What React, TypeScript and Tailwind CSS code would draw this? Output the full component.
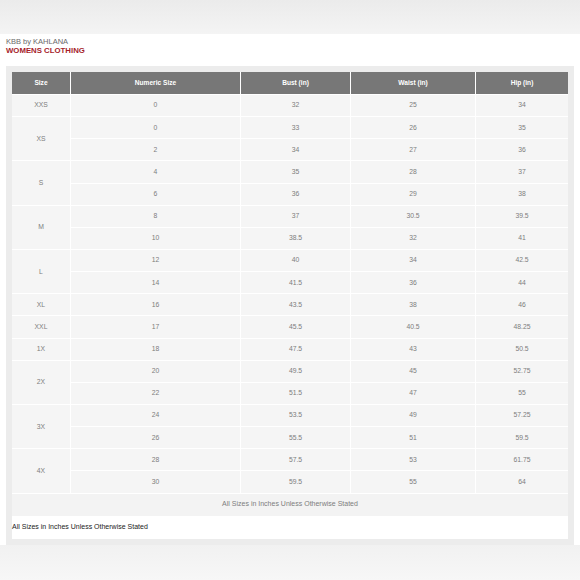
import React from 'react';

type Row = { size?: string; span?: number; numeric: string; bust: string; waist: string; hip: string };

const rows: Row[] = [
    { size: 'XXS', span: 1, numeric: '0', bust: '32', waist: '25', hip: '34' },
    { size: 'XS', span: 2, numeric: '0', bust: '33', waist: '26', hip: '35' },
    { numeric: '2', bust: '34', waist: '27', hip: '36' },
    { size: 'S', span: 2, numeric: '4', bust: '35', waist: '28', hip: '37' },
    { numeric: '6', bust: '36', waist: '29', hip: '38' },
    { size: 'M', span: 2, numeric: '8', bust: '37', waist: '30.5', hip: '39.5' },
    { numeric: '10', bust: '38.5', waist: '32', hip: '41' },
    { size: 'L', span: 2, numeric: '12', bust: '40', waist: '34', hip: '42.5' },
    { numeric: '14', bust: '41.5', waist: '36', hip: '44' },
    { size: 'XL', span: 1, numeric: '16', bust: '43.5', waist: '38', hip: '46' },
    { size: 'XXL', span: 1, numeric: '17', bust: '45.5', waist: '40.5', hip: '48.25' },
    { size: '1X', span: 1, numeric: '18', bust: '47.5', waist: '43', hip: '50.5' },
    { size: '2X', span: 2, numeric: '20', bust: '49.5', waist: '45', hip: '52.75' },
    { numeric: '22', bust: '51.5', waist: '47', hip: '55' },
    { size: '3X', span: 2, numeric: '24', bust: '53.5', waist: '49', hip: '57.25' },
    { numeric: '26', bust: '55.5', waist: '51', hip: '59.5' },
    { size: '4X', span: 2, numeric: '28', bust: '57.5', waist: '53', hip: '61.75' },
    { numeric: '30', bust: '59.5', waist: '55', hip: '64' },
];

const headers = ['Size', 'Numeric Size', 'Bust (in)', 'Waist (in)', 'Hip (in)'];

const cell = 'h-[22.15px] p-0 text-center align-middle bg-[#f5f5f5] text-[#7d7d7d] text-[6.8px] border-white border-b-[1.5px]';

export default function App() {
    return (
        <div className="w-[580px] h-[580px] flex flex-col bg-[#f3f3f3] font-['Liberation_Sans',Arial,sans-serif]">
            <div className="h-[34px] shrink-0 bg-gradient-to-b from-[#ebebeb] to-[#f4f4f4]" />

            <div className="bg-white px-[6px] pt-[3px]">
                <p className="text-[7.5px] leading-[9px] text-[#6a6a6a]">KBB by KAHLANA</p>
                <p className="text-[7.8px] leading-[9px] font-bold text-[#a51d2b]">WOMENS CLOTHING</p>

                <div className="mt-[11px] bg-[#ececec] px-[6px] pt-[6px] pb-[6px]">
                    <table className="w-full table-fixed border-separate border-spacing-0">
                        <colgroup>
                            <col className="w-[59px]" />
                            <col className="w-[170px]" />
                            <col className="w-[110px]" />
                            <col className="w-[125px]" />
                            <col />
                        </colgroup>
                        <thead>
                            <tr>
                                {headers.map((h, i) => (
                                    <th
                                        key={h}
                                        className={`h-[23px] p-0 bg-[#777] text-white text-[6.6px] font-bold text-center align-middle border-white border-b-[1.5px] ${i < 4 ? 'border-r-[1.5px]' : ''}`}
                                    >
                                        {h}
                                    </th>
                                ))}
                            </tr>
                        </thead>
                        <tbody>
                            {rows.map((r, i) => (
                                <tr key={i}>
                                    {r.size && (
                                        <td rowSpan={r.span} className={`${cell} border-r-[1.5px]`}>
                                            {r.size}
                                        </td>
                                    )}
                                    <td className={`${cell} border-r-[1.5px]`}>{r.numeric}</td>
                                    <td className={`${cell} border-r-[1.5px]`}>{r.bust}</td>
                                    <td className={`${cell} border-r-[1.5px]`}>{r.waist}</td>
                                    <td className={cell}>{r.hip}</td>
                                </tr>
                            ))}
                            <tr>
                                <td colSpan={5} className="h-[22px] p-0 text-center align-middle bg-[#f3f3f3] text-[#7d7d7d] text-[7px]">
                                    All Sizes in Inches Unless Otherwise Stated
                                </td>
                            </tr>
                        </tbody>
                    </table>
                    <div className="h-[23px] bg-white flex items-center text-[7px] text-[#222]">
                        All Sizes in Inches Unless Otherwise Stated
                    </div>
                </div>
            </div>

            <div className="flex-1 bg-gradient-to-b from-[#f1f1f1] to-[#f7f7f7]" />
        </div>
    );
}
